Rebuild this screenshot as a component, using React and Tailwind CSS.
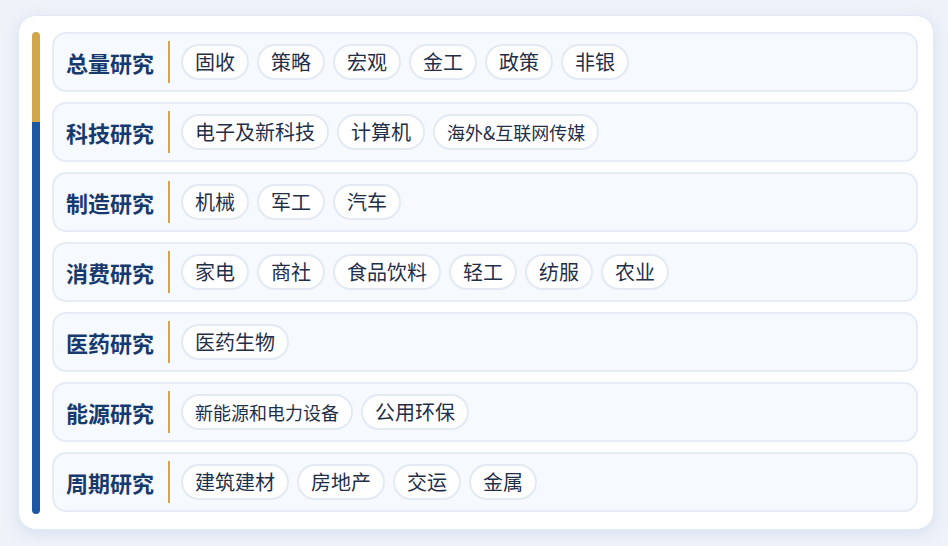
const rows = [
  ["总量研究", ["固收","策略","宏观","金工","政策","非银"]],
  ["科技研究", ["电子及新科技","计算机",["海外&互联网传媒",1]]],
  ["制造研究", ["机械","军工","汽车"]],
  ["消费研究", ["家电","商社","食品饮料","轻工","纺服","农业"]],
  ["医药研究", ["医药生物"]],
  ["能源研究", [["新能源和电力设备",1],"公用环保"]],
  ["周期研究", ["建筑建材","房地产","交运","金属"]],
];
export default function App() {
  return (
    <div className="w-[948px] h-[546px] bg-[#eef2f9] pt-[15px] pl-[18px]" style={{fontFamily:'"Noto Sans CJK SC", sans-serif'}}>
      <div className="w-[916px] h-[515px] bg-white rounded-[18px] border border-[#e3eaf5] shadow-[0_4px_14px_rgba(160,180,215,0.25)] flex pt-[16px] pl-[13px] gap-[12px]">
        <div className="w-[8px] h-[482px] rounded-full overflow-hidden flex flex-col">
          <div className="h-[90px] bg-[#d4a64a]"></div>
          <div className="flex-1 bg-[#1c57a3]"></div>
        </div>
        <div className="flex flex-col gap-[10px]">
          {rows.map(([t, tags]) => (
            <div key={t} className="w-[866px] h-[60px] rounded-[14px] bg-[#f6f9fd] border-2 border-[#e5ecf6] flex items-center pl-[12px]">
              <div className="text-[22px] font-bold text-[#163a6e] w-[90px] leading-none whitespace-nowrap">{t}</div>
              <div className="w-[2px] h-[42px] bg-[#d4a64a] ml-[12px] mr-[11px]"></div>
              <div className="flex gap-[8px]">
                {tags.map(x => {
                  const s = Array.isArray(x);
                  const n = s ? x[0] : x;
                  return <div key={n} className={`h-[36px] rounded-full bg-white border-2 border-[#e3eaf4] flex items-center px-[12px] text-[#1f2f48] whitespace-nowrap ${s ? "text-[18px]" : "text-[20px]"}`}>{n}</div>;
                })}
              </div>
            </div>
          ))}
        </div>
      </div>
    </div>
  );
}
